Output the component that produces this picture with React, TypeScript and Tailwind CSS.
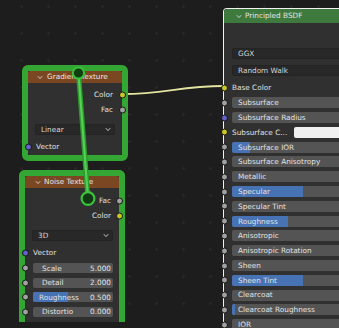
import React from 'react';

type Sock = 'grey' | 'yellow' | 'blue';

const sockColors: Record<Sock, string> = {
  grey: 'bg-[#a1a1a1]',
  yellow: 'bg-[#c7c729]',
  blue: 'bg-[#6363c7]',
};

const Socket = ({ color, side }: { color: Sock; side: 'left' | 'right' }) => (
  <span
    className={`absolute top-1/2 -translate-y-1/2 w-[7px] h-[7px] rounded-full border border-[#151515] ${sockColors[color]} ${
      side === 'left' ? 'left-[-3.5px]' : 'right-[-3.5px]'
    }`}
  />
);

const Chevron = () => (
  <svg width="6" height="5" viewBox="0 0 6 5" className="flex-shrink-0">
    <path d="M0.8 1.2 L3 3.6 L5.2 1.2" fill="none" stroke="#d8d8d8" strokeWidth="0.9" />
  </svg>
);

const Dropdown = ({ label, className }: { label: string; className: string }) => (
  <div className={`h-[11px] rounded-[2px] bg-[#282828] border border-[#232323] flex items-center justify-between pl-[5px] pr-[3px] text-[#d6d6d6] ${className}`}>
    <span className="leading-none">{label}</span>
    <Chevron />
  </div>
);

const OutRow = ({ label, sock, pr }: { label: string; sock: Sock; pr: string }) => (
  <div className={`relative h-[15px] flex items-center justify-end ${pr} text-[#e0e0e0]`}>
    <span className="leading-none">{label}</span>
    <Socket color={sock} side="right" />
  </div>
);

const NumField = ({ label, value, fill, pl = 'pl-[9px]' }: { label: string; value: string; fill?: string; pl?: string }) => (
  <div className="relative h-[14.6px] flex items-center">
    <Socket color="grey" side="left" />
    <div className="relative ml-[8px] mr-[6px] flex-1 h-[10px] rounded-[2px] bg-[#545454] overflow-hidden">
      {fill && <div className={`absolute left-0 top-0 bottom-0 bg-[#4772b3] ${fill}`} />}
      <div className={`relative h-full flex items-center justify-between ${pl} pr-[2px] text-[#e2e2e2]`}>
        <span className="leading-none">{label}</span>
        <span className="leading-none">{value}</span>
      </div>
    </div>
  </div>
);

type BsdfRow = { label: string; sock: Sock; kind: 'label' | 'field' | 'color'; fill?: string };

const bsdfRows: BsdfRow[] = [
  { label: 'Base Color', sock: 'yellow', kind: 'label' },
  { label: 'Subsurface', sock: 'grey', kind: 'field' },
  { label: 'Subsurface Radius', sock: 'blue', kind: 'field' },
  { label: 'Subsurface C...', sock: 'yellow', kind: 'color' },
  { label: 'Subsurface IOR', sock: 'grey', kind: 'field', fill: 'w-[18px]' },
  { label: 'Subsurface Anisotropy', sock: 'grey', kind: 'field' },
  { label: 'Metallic', sock: 'grey', kind: 'field' },
  { label: 'Specular', sock: 'grey', kind: 'field', fill: 'w-[71px]' },
  { label: 'Specular Tint', sock: 'grey', kind: 'field' },
  { label: 'Roughness', sock: 'grey', kind: 'field', fill: 'w-[56px]' },
  { label: 'Anisotropic', sock: 'grey', kind: 'field' },
  { label: 'Anisotropic Rotation', sock: 'grey', kind: 'field' },
  { label: 'Sheen', sock: 'grey', kind: 'field' },
  { label: 'Sheen Tint', sock: 'grey', kind: 'field', fill: 'w-[71px]' },
  { label: 'Clearcoat', sock: 'grey', kind: 'field' },
  { label: 'Clearcoat Roughness', sock: 'grey', kind: 'field', fill: 'w-[3px]' },
  { label: 'IOR', sock: 'grey', kind: 'field' },
];

const GradientNode = () => (
  <div className="absolute left-[22px] top-[65px] w-[106px] h-[96px] rounded-[6px] border-[6px] border-[#33a633]">
    <div className="h-full flex flex-col bg-[#303030] rounded-[2px]">
      <div className="h-[12px] bg-[#7b4622] flex items-center gap-[4px] pl-[9px] text-[#e6e6e6] rounded-t-[2px]">
        <Chevron />
        <span className="leading-none">Gradient Texture</span>
      </div>
      <div className="pt-[4px] flex flex-col">
        <OutRow label="Color" sock="yellow" pr="pr-[9px]" />
        <OutRow label="Fac" sock="grey" pr="pr-[9px]" />
        <Dropdown label="Linear" className="mt-[7px] mx-[7px]" />
        <div className="relative mt-[4px] h-[15px] flex items-center pl-[8px] text-[#e0e0e0]">
          <Socket color="blue" side="left" />
          <span className="leading-none">Vector</span>
        </div>
      </div>
    </div>
  </div>
);

const NoiseNode = () => (
  <div className="absolute left-[19px] top-[170px] w-[106px] h-[152px] rounded-t-[6px] border-[6px] border-b-0 border-[#33a633]">
    <div className="h-full flex flex-col bg-[#303030] rounded-t-[2px]">
      <div className="h-[12px] bg-[#7b4622] flex items-center gap-[3px] pl-[10px] text-[#e6e6e6] rounded-t-[2px]">
        <Chevron />
        <span className="leading-none">Noise Texture</span>
      </div>
      <div className="pt-[5px] flex flex-col">
        <OutRow label="Fac" sock="grey" pr="pr-[8px]" />
        <OutRow label="Color" sock="yellow" pr="pr-[8px]" />
        <Dropdown label="3D" className="mt-[7px] ml-[7px] mr-[6px]" />
        <div className="relative mt-[4px] h-[15px] flex items-center pl-[8px] text-[#e0e0e0]">
          <Socket color="blue" side="left" />
          <span className="leading-none">Vector</span>
        </div>
        <div className="mt-[1px] flex flex-col">
          <NumField label="Scale" value="5.000" />
          <NumField label="Detail" value="2.000" />
          <NumField label="Roughness" value="0.500" fill="w-[35px]" pl="pl-[6px]" />
          <NumField label="Distortio" value="0.000" />
        </div>
      </div>
    </div>
  </div>
);

const BsdfNode = () => (
  <div className="absolute left-[223px] top-[8px] w-[140px] h-[330px] border-l border-t border-[#f2f2f2] rounded-tl-[4px]">
    <div className="h-full flex flex-col bg-[#303030] rounded-tl-[3px]">
      <div className="h-[14px] bg-[#3e7a3e] flex items-center gap-[3px] pl-[12px] text-[#e6e6e6] rounded-tl-[3px]">
        <Chevron />
        <span className="leading-none">Principled BSDF</span>
      </div>
      <div className="pt-[25px] flex flex-col">
        <Dropdown label="GGX" className="ml-[8px] h-[10px]" />
        <Dropdown label="Random Walk" className="ml-[8px] mt-[6px]" />
        <div className="mt-[4.6px] flex flex-col">
          {bsdfRows.map((r) => (
            <div key={r.label} className="relative h-[14.8px] flex items-center">
              <Socket color={r.sock} side="left" />
              {r.kind === 'label' && (
                <span className="ml-[8px] leading-none text-[#e0e0e0]">{r.label}</span>
              )}
              {r.kind === 'color' && (
                <div className="ml-[8px] flex-1 flex items-center">
                  <span className="w-[62px] leading-none text-[#e0e0e0] whitespace-nowrap">{r.label}</span>
                  <div className="flex-1 h-[11px] rounded-l-[2px] bg-[#f0f0f0]" />
                </div>
              )}
              {r.kind === 'field' && (
                <div className="relative ml-[8px] flex-1 h-[11px] rounded-[2px] bg-[#545454] overflow-hidden">
                  {r.fill && <div className={`absolute left-0 top-0 bottom-0 bg-[#4772b3] ${r.fill}`} />}
                  <div className="relative h-full flex items-center pl-[6px] text-[#e2e2e2]">
                    <span className="leading-none whitespace-nowrap">{r.label}</span>
                  </div>
                </div>
              )}
            </div>
          ))}
        </div>
      </div>
    </div>
  </div>
);

export default function App() {
  return (
    <div className="relative w-[339px] h-[328px] overflow-hidden bg-[#1d1d1d] bg-[radial-gradient(circle,#282828_1px,transparent_1.6px)] bg-[length:27px_27px] bg-[position:8px_-7px] font-['DejaVu_Sans',sans-serif] text-[7.3px]">
      <svg className="absolute inset-0 pointer-events-none" width="339" height="328">
        <path d="M123 94 C165 94 180 86 224 86" fill="none" stroke="#1a1a1a" strokeWidth="3.6" />
        <path d="M123 94 C165 94 180 86 224 86" fill="none" stroke="#e4e4a2" strokeWidth="1.8" />
      </svg>
      <GradientNode />
      <NoiseNode />
      <BsdfNode />
      <svg className="absolute inset-0 pointer-events-none" width="339" height="328">
        <line x1="78.5" y1="73" x2="88" y2="198.5" stroke="#2b9a2b" strokeWidth="5" />
        <line x1="78.5" y1="73" x2="88" y2="198.5" stroke="#55cf55" strokeWidth="2.2" />
        <circle cx="78.5" cy="73" r="5.6" fill="#0f3f0f" stroke="#38c038" strokeWidth="2" />
        <circle cx="88" cy="198.5" r="6.4" fill="#123a12" stroke="#3cc23c" strokeWidth="2.2" />
      </svg>
    </div>
  );
}
